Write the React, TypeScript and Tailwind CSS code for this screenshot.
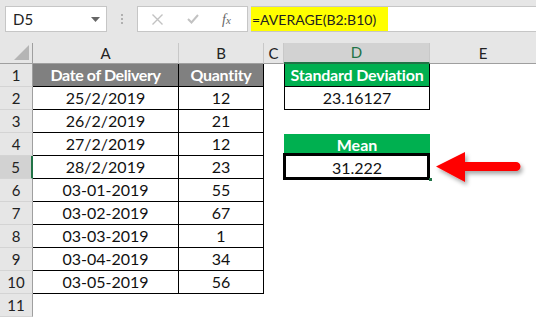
import React from "react";

const font = { fontFamily: "Lato, 'Liberation Sans', sans-serif" };

const data: [string, string][] = [
  ["25/2/2019", "12"],
  ["26/2/2019", "21"],
  ["27/2/2019", "12"],
  ["28/2/2019", "23"],
  ["03-01-2019", "55"],
  ["03-02-2019", "67"],
  ["03-03-2019", "1"],
  ["03-04-2019", "34"],
  ["03-05-2019", "56"],
];

function RowHead({ n, sel }: { n: number; sel?: boolean }) {
  return (
    <div
      className={
        "flex items-center justify-center border-b border-[#d4d4d4] text-[15px] text-[#222] " +
        (sel ? "bg-[#d2d2d2] border-r-2 border-r-[#217346]" : "bg-[#e6e6e6] border-r border-r-[#9f9f9f]")
      }
    >
      {n}
    </div>
  );
}

export default function App() {
  return (
    <div className="w-[536px] h-[319px] overflow-hidden bg-white relative" style={font}>
      {/* Formula bar */}
      <div className="h-[43px] bg-[#e6e6e6] flex items-start pt-[6px] pl-[5px]">
        <div className="w-[102px] h-[26px] bg-white border border-[#c6c6c6] flex items-center justify-between pl-[7px] pr-[6px]">
          <span className="text-[15px] text-[#222]">D5</span>
          <svg width="9" height="5" viewBox="0 0 9 5">
            <path d="M0 0 L9 0 L4.5 5 Z" fill="#666" />
          </svg>
        </div>
        <div className="w-[30px] h-[26px] flex flex-col items-center justify-center gap-[2px]">
          <div className="w-[2px] h-[2px] bg-[#b0b0b0]" />
          <div className="w-[2px] h-[2px] bg-[#b0b0b0]" />
          <div className="w-[2px] h-[2px] bg-[#b0b0b0]" />
        </div>
        <div className="w-[111px] h-[26px] bg-white border border-[#c6c6c6] flex items-center">
          <svg className="ml-[14px]" width="11" height="11" viewBox="0 0 11 11">
            <path d="M0.5 0.5 L10.5 10.5 M10.5 0.5 L0.5 10.5" stroke="#c2c2c2" strokeWidth="1.4" />
          </svg>
          <svg className="ml-[24px]" width="12" height="10" viewBox="0 0 12 10">
            <path d="M1 5 L4.5 8.5 L11 1" stroke="#c2c2c2" strokeWidth="2" fill="none" />
          </svg>
          <span className="ml-[23px] text-[14px] italic text-[#666]" style={{ fontFamily: "'Liberation Serif', serif" }}>
            f<span className="text-[11px]">x</span>
          </span>
        </div>
        <div className="ml-[3px] flex-1 h-[26px] bg-white border-y border-[#c6c6c6] flex items-stretch">
          <div className="bg-[#ffff00] w-[137px] flex items-center pl-[1px] text-[14px] text-[#222]">
            =AVERAGE(B2:B10)
          </div>
        </div>
      </div>

      {/* Sheet */}
      <div
        className="grid"
        style={{
          gridTemplateColumns: "33px 146px 85px 20px 146px 1fr",
          gridTemplateRows: "21px repeat(11, 23px)",
        }}
      >
        {/* column headers */}
        <div className="bg-[#e6e6e6] border-r border-r-[#9f9f9f] border-b border-b-[#9f9f9f] relative">
          <svg className="absolute right-[3px] bottom-[3px]" width="15" height="15" viewBox="0 0 15 15">
            <path d="M15 0 L15 15 L0 15 Z" fill="#b5b5b5" />
          </svg>
        </div>
        {["A", "B", "C"].map((c) => (
          <div
            key={c}
            className="bg-[#e6e6e6] border-r border-r-[#c8c8c8] border-b border-b-[#9f9f9f] flex items-center justify-center text-[15px] text-[#222]"
          >
            {c}
          </div>
        ))}
        <div className="bg-[#d2d2d2] border-r border-r-[#c8c8c8] border-b-2 border-b-[#217346] flex items-center justify-center text-[15px] text-[#217346]">
          D
        </div>
        <div className="bg-[#e6e6e6] border-b border-b-[#9f9f9f] flex items-center justify-center text-[15px] text-[#222]">
          E
        </div>

        {/* row 1 */}
        <RowHead n={1} />
        <div className="bg-[#808080] border-r border-b border-black flex items-center justify-center text-[16px] font-bold tracking-[-0.4px] text-white">
          Date of Delivery
        </div>
        <div className="bg-[#808080] border-r border-b border-black flex items-center justify-center text-[16px] font-bold tracking-[-0.3px] text-white">
          Quantity
        </div>
        <div />
        <div className="bg-[#00b050] border-x border-b border-black flex items-center justify-center text-[16px] font-bold tracking-[-0.2px] text-white">
          Standard Deviation
        </div>
        <div />

        {data.map(([d, q], i) => {
          const n = i + 2;
          return (
            <React.Fragment key={n}>
              <RowHead n={n} sel={n === 5} />
              <div className="border-r border-b border-black flex items-center justify-center text-[16px] text-[#111]">
                {d}
              </div>
              <div className="border-r border-b border-black flex items-center justify-center text-[16px] text-[#111]">
                {q}
              </div>
              <div />
              {n === 2 ? (
                <div className="border-x border-b border-black flex items-center justify-center text-[16px] text-[#111]">
                  23.16127
                </div>
              ) : n === 4 ? (
                <div className="bg-[#00b050] mt-[1px] flex items-center justify-center text-[16px] font-bold text-white">
                  Mean
                </div>
              ) : n === 5 ? (
                <div className="relative flex items-center justify-center text-[16px] text-[#111]">
                  <div className="absolute left-[-1px] right-0 top-[-3px] bottom-[-1px] border-[3px] border-black" />
                  <div className="absolute right-[-2px] bottom-[-2px] w-[3px] h-[3px] bg-[#217346]" />
                  31.222
                </div>
              ) : (
                <div />
              )}
              <div />
            </React.Fragment>
          );
        })}
        <RowHead n={11} />
        <div />
        <div />
        <div />
        <div />
        <div />
      </div>

      {/* red arrow */}
      <svg className="absolute left-[434px] top-[150px]" width="94" height="38" viewBox="0 0 94 38">
        <defs>
          <filter id="sh" x="-20%" y="-40%" width="140%" height="180%">
            <feDropShadow dx="2" dy="3" stdDeviation="2" floodColor="#000" floodOpacity="0.35" />
          </filter>
        </defs>
        <g filter="url(#sh)">
          <path d="M2 16.5 L31 2 L31 12 L82 12 A4.5 4.5 0 0 1 82 21 L31 21 L31 32 Z" fill="#ff0000" />
        </g>
      </svg>
    </div>
  );
}
